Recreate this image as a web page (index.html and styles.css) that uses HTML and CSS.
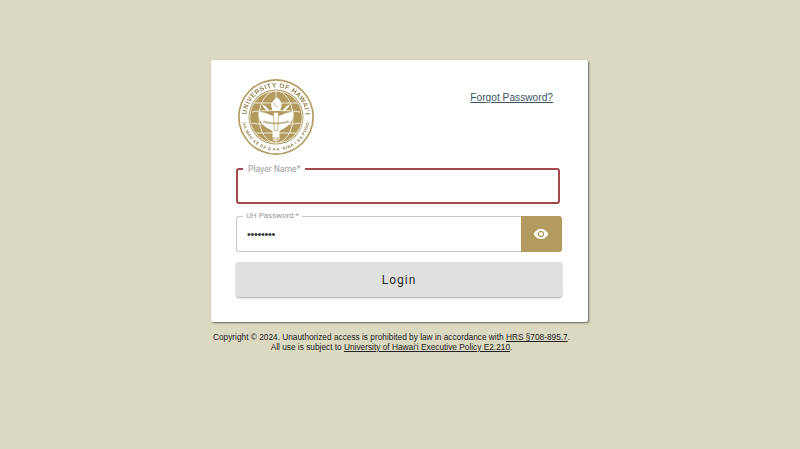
FILE: index.html
```html
<!DOCTYPE html>
<html lang="en">
<head>
<meta charset="utf-8">
<title>Login</title>
<link rel="stylesheet" href="styles.css">
</head>
<body>
<main class="page">
  <section class="card">
    <header class="card-top">
      <svg class="seal" viewBox="0 0 76 76" aria-label="University of Hawaii seal">
        <defs>
          <path id="arc-top" d="M8.500 38a29.500 29.500 0 0 1 59 0"/>
          <path id="arc-bottom" d="M4.300 38a33.700 33.700 0 0 0 67.400 0"/>
          <clipPath id="globe-clip"><circle cx="38" cy="38" r="26.500"/></clipPath>
        </defs>
        <circle cx="38" cy="38" r="38" fill="#b39b60"/>
        <circle cx="38" cy="38" r="36.300" fill="#fff"/>
        <circle cx="38" cy="38" r="27.500" fill="#b39b60"/>
        <circle cx="38" cy="38" r="26.600" fill="#f6f2e6"/>
        <circle cx="38" cy="38" r="25.800" fill="#b39b60"/>
        <g clip-path="url(#globe-clip)" fill="none" stroke="#f1ebda" stroke-width="1">
          <ellipse cx="38" cy="38" rx="17" ry="26"/>
          <path d="M38 12v52M12 24h52M12 54h52"/>
          <path d="M14 33c8-2 40-2 48 0M14 44c8 2 40 2 48 0"/>
        </g>
        <path d="M20.300 32.500c5 .8 9.800 2 13.700 4.300h8c3.900-2.300 8.700-3.500 13.700-4.300-.5 8.500-3.500 13.500-9 16.500l-5.200 3v6.500h-7v-6.500l-5.200-3c-5.500-3-8.500-8-9-16.500z" fill="#fff"/>
        <path d="M24 25c3 1.500 6 4 7.500 7.500-3-.7-6-3.500-7.500-7.500zM52 25c-3 1.500-6 4-7.500 7.500 3-.7 6-3.500 7.500-7.500z" fill="#fff"/>
        <path d="M39.500 18.500c-4.500 2.500-7 6-6 9.500.5 2 1 3 1 4h7.500c0-1.200.9-2.500 1.500-4.300 1-3.500-1.500-6.700-4-9.200z" fill="#fff"/>
        <path d="M35.500 24c1.500 2.500 3 4.500 4.500 3.500" fill="none" stroke="#b39b60" stroke-width=".8"/>
        <path d="M33.500 32.500h9" stroke="#b39b60" stroke-width="1" fill="none"/>
        <path d="M35.500 33.500h5l-.8 18h-3.400z" fill="#fff" stroke="#b39b60" stroke-width=".7"/>
        <path d="M25.500 42.500c7 2.500 18 2.500 25 0" fill="none" stroke="#a88f55" stroke-width="1.900" stroke-dasharray="1.300 .7"/>
        <text class="seal-top"><textPath href="#arc-top" startOffset="50%" text-anchor="middle" textLength="88">UNIVERSITY OF HAWAI‘I</textPath></text>
        <text class="seal-bottom"><textPath href="#arc-bottom" startOffset="50%" text-anchor="middle" textLength="94">UA MAU KE EA O KA ‘ĀINA I KA PONO</textPath></text>
        <text class="seal-year" x="38" y="62" text-anchor="middle">1907</text>
      </svg>
      <a class="forgot" href="#">Forgot Password?</a>
    </header>
    <form class="form">
      <fieldset class="field field-error">
        <legend class="legend">Player Name*</legend>
      </fieldset>
      <div class="password-row">
        <fieldset class="field field-password">
          <legend class="legend legend-password">UH Password:*</legend>
          <span class="dots">••••••••</span>
        </fieldset>
        <button class="eye" type="button" aria-label="Show password">
          <svg viewBox="0 0 24 24" class="eye-icon"><path fill="#fff" d="M12 4.500C7 4.500 2.730 7.610 1 12c1.730 4.390 6 7.500 11 7.500s9.270-3.110 11-7.500c-1.730-4.390-6-7.500-11-7.500zM12 17c-2.760 0-5-2.240-5-5s2.240-5 5-5 5 2.240 5 5-2.240 5-5 5zm0-8c-1.660 0-3 1.340-3 3s1.340 3 3 3 3-1.340 3-3-1.340-3-3-3z"/></svg>
        </button>
      </div>
      <button class="login" type="button">Login</button>
    </form>
  </section>
  <footer class="legal">
    <p>Copyright © 2024. Unauthorized access is prohibited by law in accordance with <a href="#">HRS §708-895.7</a>.</p>
    <p>All use is subject to <a href="#">University of Hawai‘i Executive Policy E2.210</a>.</p>
  </footer>
</main>
</body>
</html>
```

FILE: styles.css
```css
* { box-sizing: border-box; }
html, body { margin: 0; height: 100%; }
body {
  background: #dcd9c3;
  font-family: "Liberation Sans", Arial, sans-serif;
  overflow: hidden;
}
.page {
  display: flex;
  flex-direction: column;
  align-items: center;
  padding: 60px 1px 0 0;
}
.card {
  width: 377px;
  height: 262px;
  background: #fff;
  border-radius: 2px;
  box-shadow: 1px 1px 2px rgba(0, 0, 0, .55);
  padding: 19px 26px 0 25px;
}
.card-top {
  display: flex;
  justify-content: space-between;
  align-items: flex-start;
  height: 90px;
  padding-right: 9px;
}
.seal { width: 76px; height: 76px; margin-left: 2px; display: block; filter: blur(.3px); }
.seal-top { font: 700 6.6px "Liberation Sans", sans-serif; fill: #957e48; }
.seal-bottom { font: 700 4.2px "Liberation Sans", sans-serif; fill: #957e48; }
.seal-year { font: 700 3.4px "Liberation Sans", sans-serif; fill: #fff; }
.forgot {
  margin-top: 12px;
  font-size: 10.2px;
  line-height: 13px;
  color: #3a5566;
}
.form { display: flex; flex-direction: column; }
.field {
  margin: 0;
  min-width: 0;
  padding: 0;
  background: #fff;
}
.field-error {
  width: 324px;
  height: 40px;
  margin-top: -5px;
  border: 2px solid #a04a4c;
  border-radius: 3px;
}
.legend {
  margin-left: 5px;
  padding: 0 5px;
  font: 400 8.6px/10px Roboto, sans-serif;
  color: #9a9a9a;
}
.password-row { display: flex; margin-top: 7px; width: 326px; height: 41px; }
.field-password {
  flex: 1;
  border: 1px solid #c8c8c8;
  border-right: 0;
  border-radius: 3px 0 0 3px;
  padding: 6px 0 0 10px;
}
.legend-password { margin-left: -4px; padding: 0 3px; font-size: 7.9px; }
.dots { display: block; font: 400 11px/14px "Liberation Sans", sans-serif; color: #333; letter-spacing: -.35px; }
.eye {
  width: 41px;
  margin-top: 5px;
  height: 36px;
  padding: 0 1px 1px 0;
  border: 0;
  border-radius: 0 3px 3px 0;
  background: #b39b60;
  display: flex;
  align-items: center;
  justify-content: center;
}
.eye-icon { width: 16px; height: 16px; display: block; }
.login {
  width: 326px;
  height: 35px;
  margin-top: 10px;
  border: 0;
  border-radius: 3px;
  background: #e0e0e0;
  box-shadow: 0 1px 2px rgba(0, 0, 0, .35);
  font: 400 12px Roboto, sans-serif;
  letter-spacing: 1px;
  color: #2a2a2a;
}
.legal {
  margin: 10px 16px 0 0;
  text-align: center;
  font-size: 8.3px;
  line-height: 10px;
  color: #222;
}
.legal p { margin: 0; }
.legal a { color: inherit; }
```
